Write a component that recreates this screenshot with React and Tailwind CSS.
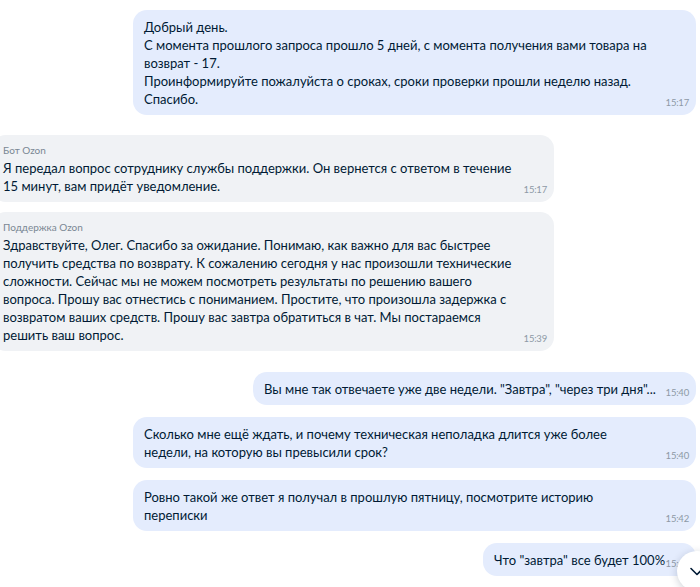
const font = { fontFamily: "Lato, 'Noto Sans', sans-serif" };

function Time({ children }) {
  return (
    <span className="absolute bottom-[6px] right-[7px] text-[9.5px] leading-3 tracking-[-0.2px] text-[#8d99a6]">
      {children}
    </span>
  );
}

function Bubble({ mine, label, lines, time, className = "" }) {
  return (
    <div
      className={`relative rounded-[14px] pl-[11px] pr-3 pt-2 pb-[7px] text-[13px] leading-[18px] text-[#001a34] ${
        mine ? "bg-[#e4ecfd]" : "bg-[#f0f2f5]"
      } ${className}`}
    >
      {label && <div className="mb-[2px] text-[10px] leading-[14px] text-[#7a8793]">{label}</div>}
      {lines.map((l, i) => (
        <div key={i} className="whitespace-nowrap">
          {l}
          {i === lines.length - 1 && <span className="inline-block w-[22px]" />}
        </div>
      ))}
      <Time>{time}</Time>
    </div>
  );
}

export default function App() {
  return (
    <div className="relative h-[587px] w-[700px] overflow-hidden bg-white" style={font}>
      <div className="flex flex-col pt-[10px]">
        <div className="flex justify-end pr-1">
          <Bubble
            mine
            className="w-[563px]"
            time="15:17"
            lines={[
              "Добрый день.",
              "С момента прошлого запроса прошло 5 дней, с момента получения вами товара на",
              "возврат - 17.",
              "Проинформируйте пожалуйста о сроках, сроки проверки прошли неделю назад.",
              "Спасибо.",
            ]}
          />
        </div>

        <div className="mt-5 -ml-2">
          <Bubble
            className="w-[562px]"
            label="Бот Ozon"
            time="15:17"
            lines={[
              "Я передал вопрос сотруднику службы поддержки. Он вернется с ответом в течение",
              "15 минут, вам придёт уведомление.",
            ]}
          />
        </div>

        <div className="mt-[10px] -ml-2">
          <Bubble
            className="w-[562px]"
            label="Поддержка Ozon"
            time="15:39"
            lines={[
              "Здравствуйте, Олег. Спасибо за ожидание. Понимаю, как важно для вас быстрее",
              "получить средства по возврату. К сожалению сегодня у нас произошли технические",
              "сложности. Сейчас мы не можем посмотреть результаты по решению вашего",
              "вопроса. Прошу вас отнестись с пониманием. Простите, что произошла задержка с",
              "возвратом ваших средств. Прошу вас завтра обратиться в чат. Мы постараемся",
              "решить ваш вопрос.",
            ]}
          />
        </div>

        <div className="mt-[21px] flex justify-end pr-1">
          <Bubble
            mine
            className="w-[443px]"
            time="15:40"
            lines={['Вы мне так отвечаете уже две недели. "Завтра", "через три дня"...']}
          />
        </div>

        <div className="mt-3 flex justify-end pr-1">
          <Bubble
            mine
            className="w-[563px]"
            time="15:40"
            lines={[
              "Сколько мне ещё ждать, и почему техническая неполадка длится уже более",
              "недели, на которую вы превысили срок?",
            ]}
          />
        </div>

        <div className="mt-3 flex justify-end pr-1">
          <Bubble
            mine
            className="w-[563px]"
            time="15:42"
            lines={[
              "Ровно такой же ответ я получал в прошлую пятницу, посмотрите историю",
              "переписки",
            ]}
          />
        </div>

        <div className="mt-3 flex justify-end pr-1">
          <Bubble mine className="w-[213px]" time="15:42" lines={['Что "завтра" все будет 100%']} />
        </div>
      </div>

      <button
        type="button"
        className="absolute left-[677px] top-[551px] flex h-10 w-10 items-center justify-center rounded-full bg-white shadow-[0_2px_8px_rgba(0,26,52,0.2)]"
      >
        <svg width="16" height="16" viewBox="0 0 16 16" fill="none">
          <path d="M2 5.5l6 6 6-6" stroke="#001a34" strokeWidth="1.6" strokeLinecap="round" strokeLinejoin="round" />
        </svg>
      </button>
    </div>
  );
}
